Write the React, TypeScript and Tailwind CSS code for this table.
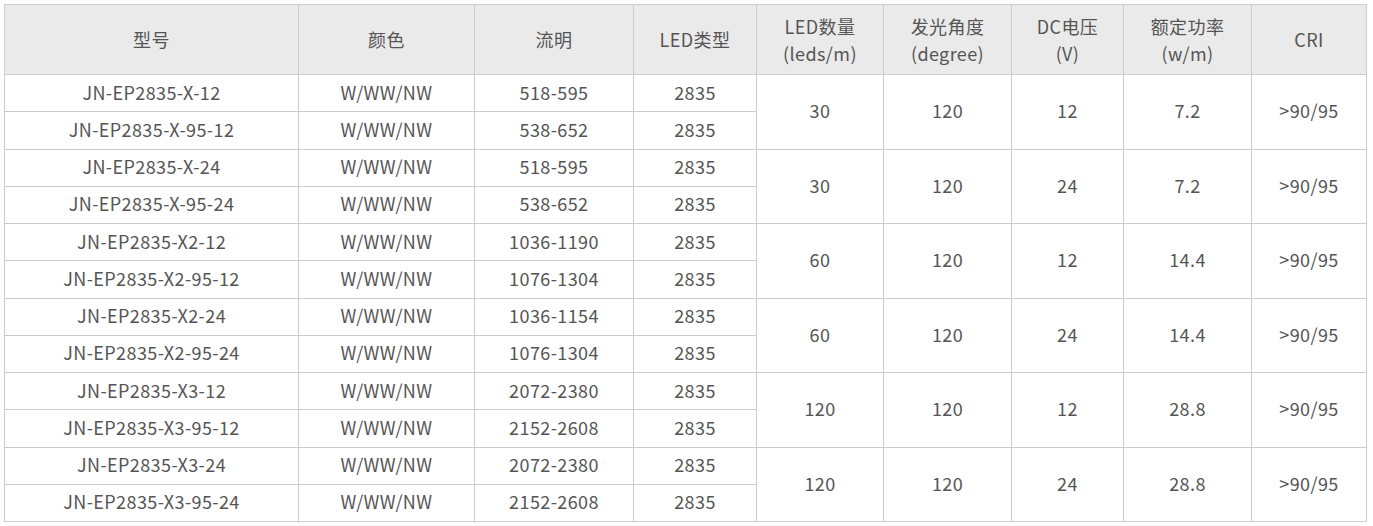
import React from 'react';

type Row = { model: string; color: string; flux: string; type: string };
type Group = { rows: Row[]; qty: string; angle: string; volt: string; power: string; cri: string };

const groups: Group[] = [
  {
    rows: [
      { model: 'JN-EP2835-X-12', color: 'W/WW/NW', flux: '518-595', type: '2835' },
      { model: 'JN-EP2835-X-95-12', color: 'W/WW/NW', flux: '538-652', type: '2835' },
    ],
    qty: '30', angle: '120', volt: '12', power: '7.2', cri: '>90/95',
  },
  {
    rows: [
      { model: 'JN-EP2835-X-24', color: 'W/WW/NW', flux: '518-595', type: '2835' },
      { model: 'JN-EP2835-X-95-24', color: 'W/WW/NW', flux: '538-652', type: '2835' },
    ],
    qty: '30', angle: '120', volt: '24', power: '7.2', cri: '>90/95',
  },
  {
    rows: [
      { model: 'JN-EP2835-X2-12', color: 'W/WW/NW', flux: '1036-1190', type: '2835' },
      { model: 'JN-EP2835-X2-95-12', color: 'W/WW/NW', flux: '1076-1304', type: '2835' },
    ],
    qty: '60', angle: '120', volt: '12', power: '14.4', cri: '>90/95',
  },
  {
    rows: [
      { model: 'JN-EP2835-X2-24', color: 'W/WW/NW', flux: '1036-1154', type: '2835' },
      { model: 'JN-EP2835-X2-95-24', color: 'W/WW/NW', flux: '1076-1304', type: '2835' },
    ],
    qty: '60', angle: '120', volt: '24', power: '14.4', cri: '>90/95',
  },
  {
    rows: [
      { model: 'JN-EP2835-X3-12', color: 'W/WW/NW', flux: '2072-2380', type: '2835' },
      { model: 'JN-EP2835-X3-95-12', color: 'W/WW/NW', flux: '2152-2608', type: '2835' },
    ],
    qty: '120', angle: '120', volt: '12', power: '28.8', cri: '>90/95',
  },
  {
    rows: [
      { model: 'JN-EP2835-X3-24', color: 'W/WW/NW', flux: '2072-2380', type: '2835' },
      { model: 'JN-EP2835-X3-95-24', color: 'W/WW/NW', flux: '2152-2608', type: '2835' },
    ],
    qty: '120', angle: '120', volt: '24', power: '28.8', cri: '>90/95',
  },
];

const cell = 'border border-[#cccccc] text-center align-middle p-0';
const bodyCell = `${cell} pb-[2px]`;

export default function App() {
  return (
    <div className="bg-white pl-[4px] pt-[4px] text-[18px] leading-[27px] tracking-[0.4px] text-[#555555] font-['Noto_Sans_CJK_SC',sans-serif]">
      <table className="table-fixed border-collapse w-[1363px]">
        <colgroup>
          <col className="w-[294px]" />
          <col className="w-[176px]" />
          <col className="w-[159px]" />
          <col className="w-[123px]" />
          <col className="w-[127px]" />
          <col className="w-[128px]" />
          <col className="w-[112px]" />
          <col className="w-[128px]" />
          <col className="w-[115px]" />
        </colgroup>
        <thead>
          <tr className="h-[70px] bg-[#eaeaea]">
            <th className={`${cell} font-normal`}>型号</th>
            <th className={`${cell} font-normal`}>颜色</th>
            <th className={`${cell} font-normal`}>流明</th>
            <th className={`${cell} font-normal`}>LED类型</th>
            <th className={`${cell} font-normal`}>LED数量<br />(leds/m)</th>
            <th className={`${cell} font-normal`}>发光角度<br />(degree)</th>
            <th className={`${cell} font-normal`}>DC电压<br />(V)</th>
            <th className={`${cell} font-normal`}>额定功率<br />(w/m)</th>
            <th className={`${cell} font-normal`}>CRI</th>
          </tr>
        </thead>
        <tbody>
          {groups.map((g, gi) =>
            g.rows.map((r, ri) => (
              <tr key={`${gi}-${ri}`} className="h-[37.25px]">
                <td className={bodyCell}>{r.model}</td>
                <td className={bodyCell}>{r.color}</td>
                <td className={bodyCell}>{r.flux}</td>
                <td className={bodyCell}>{r.type}</td>
                {ri === 0 && (
                  <>
                    <td rowSpan={2} className={bodyCell}>{g.qty}</td>
                    <td rowSpan={2} className={bodyCell}>{g.angle}</td>
                    <td rowSpan={2} className={bodyCell}>{g.volt}</td>
                    <td rowSpan={2} className={bodyCell}>{g.power}</td>
                    <td rowSpan={2} className={bodyCell}>{g.cri}</td>
                  </>
                )}
              </tr>
            ))
          )}
        </tbody>
      </table>
    </div>
  );
}
